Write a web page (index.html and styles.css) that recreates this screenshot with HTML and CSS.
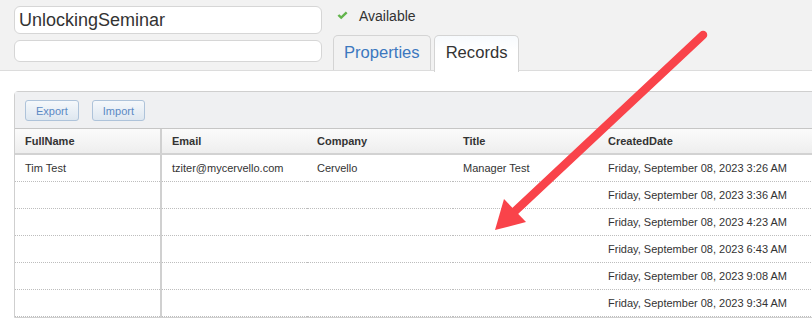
FILE: index.html
```html
<!DOCTYPE html>
<html>
<head>
  <title>UnlockingSeminar - Records</title>
  <link rel="stylesheet" href="styles.css">
</head>
<body>
  <div class="topbar">
    <div class="names">
      <input type="text" class="name-input" value="UnlockingSeminar">
      <input type="text" class="desc-input" value="">
    </div>
    <div class="side">
      <div class="status">
        <svg class="check" width="11" height="9" viewBox="0 0 11 9">
          <path d="M0.5 4.8 L2.3 3.2 L4.2 5 L8.8 0.5 L10.5 2.2 L4.2 8.3 Z" fill="#62b44c"/>
        </svg>
        <span>Available</span>
      </div>
      <div class="tabs">
        <div class="tab">Properties</div>
        <div class="tab active">Records</div>
      </div>
    </div>
  </div>

  <div class="panel">
    <div class="toolbar">
      <button class="tool-btn">Export</button>
      <button class="tool-btn">Import</button>
    </div>
    <table class="grid">
      <colgroup>
        <col class="c1"><col class="c2"><col class="c3"><col class="c4"><col>
      </colgroup>
      <thead>
        <tr>
          <th class="first">FullName</th>
          <th>Email</th>
          <th>Company</th>
          <th>Title</th>
          <th>CreatedDate</th>
        </tr>
      </thead>
      <tbody>
        <tr>
          <td class="first">Tim Test</td>
          <td>tziter@mycervello.com</td>
          <td>Cervello</td>
          <td>Manager Test</td>
          <td>Friday, September 08, 2023 3:26 AM</td>
        </tr>
        <tr><td class="first"></td><td></td><td></td><td></td><td>Friday, September 08, 2023 3:36 AM</td></tr>
        <tr><td class="first"></td><td></td><td></td><td></td><td>Friday, September 08, 2023 4:23 AM</td></tr>
        <tr><td class="first"></td><td></td><td></td><td></td><td>Friday, September 08, 2023 6:43 AM</td></tr>
        <tr><td class="first"></td><td></td><td></td><td></td><td>Friday, September 08, 2023 9:08 AM</td></tr>
        <tr><td class="first"></td><td></td><td></td><td></td><td>Friday, September 08, 2023 9:34 AM</td></tr>
      </tbody>
    </table>
  </div>

  <!-- annotation arrow drawn over the screenshot -->
  <svg class="arrow" width="812" height="318" viewBox="0 0 812 318">
    <line x1="703" y1="35" x2="513" y2="213" stroke="#f9434a" stroke-width="8.5" stroke-linecap="round"/>
    <polygon points="495,230 504,199 526,222" fill="#f9434a"/>
  </svg>
</body>
</html>
```

FILE: styles.css
```css
body {
  margin: 0;
  background: #fff;
  font-family: "Liberation Sans", Arial, sans-serif;
  color: #333;
  overflow: hidden;
  position: relative;
}

.topbar {
  display: flex;
  height: 70px;
  padding-left: 14px;
  background: #f2f2f2;
  border-bottom: 1px solid #dcdcdc;
}
.names { width: 308px; }
.names input {
  display: block;
  width: 100%;
  box-sizing: border-box;
  border: 1px solid #d6d6d6;
  border-radius: 6px;
  background: #fff;
  font-family: inherit;
  color: #333;
  outline: none;
}
.name-input {
  margin-top: 6px;
  height: 28px;
  padding: 0 4px;
  font-size: 18px;
}
.desc-input {
  margin-top: 6px;
  height: 22px;
  padding: 0 4px;
  font-size: 13px;
}

.side { margin-left: 11px; }
.status {
  display: flex;
  align-items: center;
  height: 20px;
  margin-top: 6px;
  padding-left: 4px;
  font-size: 14px;
}
.check { margin-right: 11px; margin-top: -1px; }
.tabs {
  display: flex;
  gap: 3px;
  margin-top: 9px;
}
.tab {
  height: 34px;
  padding: 0 10px;
  line-height: 34px;
  font-size: 16.6px;
  color: #3c78bf;
  border: 1px solid #d4d4d4;
  border-bottom: none;
  border-radius: 5px 5px 0 0;
}
.tab.active {
  height: 36px;
  background: linear-gradient(#f7fafd, #fff 40%);
  color: #333;
  padding: 0 11px;
}

.panel {
  margin: 20px -30px 0 14px;
  border: 1px solid #cfcfcf;
  border-radius: 4px 4px 0 0;
}
.toolbar {
  display: flex;
  gap: 13px;
  height: 37px;
  padding: 8px 0 0 10px;
  box-sizing: border-box;
  background: #eff0f2;
  border-bottom: 1px solid #c6c6c6;
}
.tool-btn {
  height: 21px;
  padding: 0 10px;
  font-family: inherit;
  font-size: 11px;
  color: #5b89c4;
  border: 1px solid #aec3da;
  border-radius: 3px;
  background: linear-gradient(#f5f8fb, #dee7f0);
}

.grid {
  width: 100%;
  border-collapse: collapse;
  table-layout: fixed;
  font-size: 11px;
}
.grid col.c1 { width: 146px; }
.grid col.c2 { width: 146px; }
.grid col.c3 { width: 146px; }
.grid col.c4 { width: 145px; }
.grid th {
  height: 24px;
  padding: 0 10px;
  text-align: left;
  font-weight: bold;
  background: linear-gradient(#fbfbfb, #eeeeee);
  border-bottom: 2px solid #d2d2d2;
  white-space: nowrap;
}
.grid td {
  height: 26px;
  padding: 0 10px;
  border-bottom: 1px dotted #bdbdbd;
  white-space: nowrap;
}
.grid .first { border-right: 2px solid #d0d0d0; }

.arrow {
  position: absolute;
  left: 0;
  top: 0;
  pointer-events: none;
}
```
